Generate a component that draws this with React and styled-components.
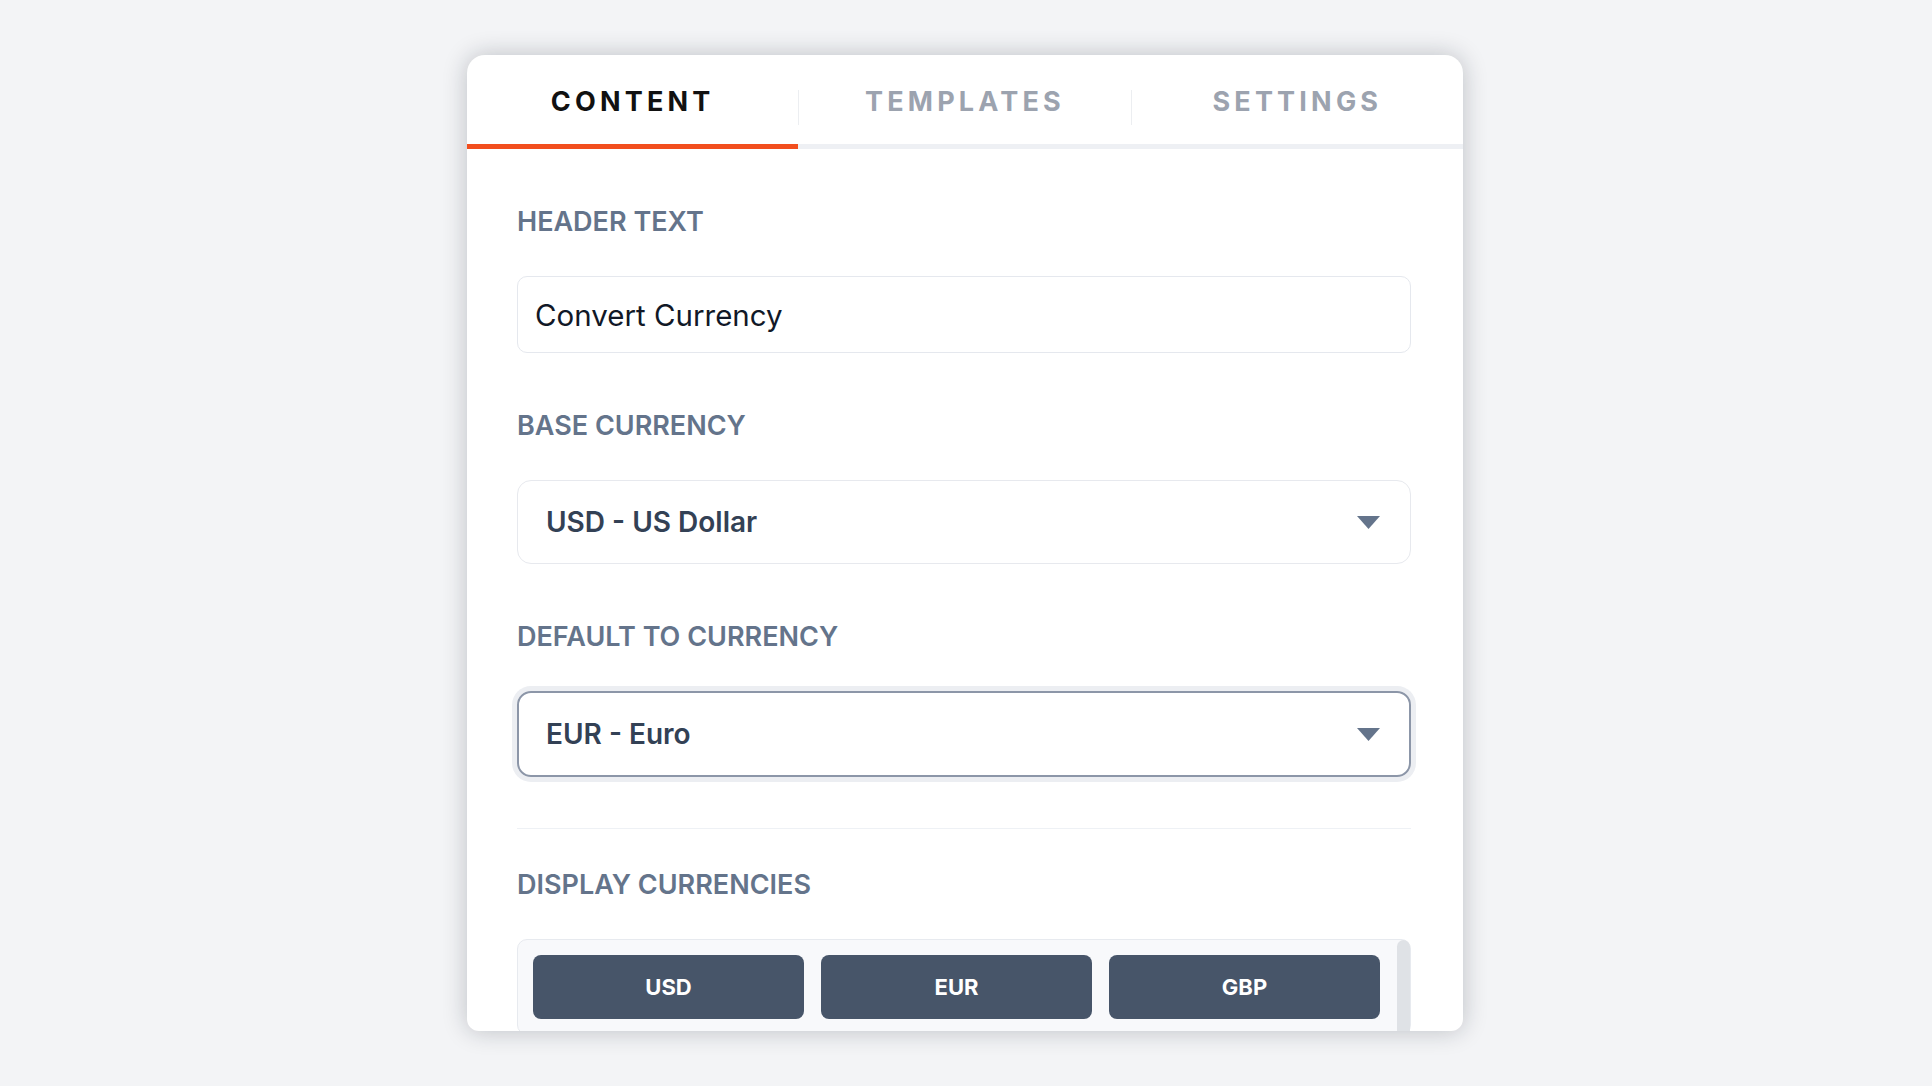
import React from "react";
import styled, {createGlobalStyle} from "styled-components";

const GlobalStyle = createGlobalStyle`
    body {
        margin: 0;
        background: #f3f4f6;
        font-family: Inter, "Liberation Sans", sans-serif;
    }
`;

const Page = styled.div`
    display: flex;
    justify-content: center;
    padding: 55px 2px 0 0;
    min-height: 100vh;
    box-sizing: border-box;
`;

const Card = styled.div`
    width: 996px;
    height: 976px;
    background: #fff;
    border-radius: 18px 18px 12px 12px;
    box-shadow: 0 0 24px rgba(15, 23, 42, 0.24);
    overflow: hidden;
    display: flex;
    flex-direction: column;
`;

const TabBar = styled.div`
    display: flex;
    border-bottom: 5px solid #eef0f4;
`;

const Tab = styled.div`
    flex: 1;
    height: 94px;
    margin-bottom: -5px;
    box-sizing: border-box;
    padding-top: 33px;
    text-align: center;
    font-size: 27px;
    line-height: 1;
    font-weight: 700;
    letter-spacing: 4.2px;
    color: ${({active}) => (active ? "#111111" : "#9ca3af")};
    border-bottom: 5px solid ${({active}) => (active ? "#f24e1e" : "transparent")};
    cursor: pointer;
`;

const TabDivider = styled.div`
    width: 1px;
    height: 35px;
    margin-top: 35px;
    background: #eceef1;
`;

const Body = styled.div`
    display: flex;
    flex-direction: column;
    padding: 59px 52px 0 50px;
`;

const Label = styled.div`
    font-size: 27px;
    line-height: 1;
    font-weight: 600;
    color: #64748b;
    margin-top: ${({first}) => (first ? "0" : "59px")};
    margin-bottom: 41px;
`;

const TextInput = styled.input`
    height: 77px;
    box-sizing: border-box;
    border: 1px solid #e5e8ee;
    border-radius: 10px;
    padding: 0 17px;
    font-family: Inter, "Liberation Sans", sans-serif;
    font-size: 29.5px;
    color: #111827;
    outline: none;
    background: #fff;
`;

const Select = styled.div`
    height: ${({focused}) => (focused ? "86px" : "84px")};
    box-sizing: border-box;
    display: flex;
    align-items: center;
    justify-content: space-between;
    padding: 0 ${({focused}) => (focused ? "29px 0 27px" : "30px 0 28px")};
    border: ${({focused}) => (focused ? "2px solid #8c96a8" : "1px solid #e7e9ee")};
    border-radius: 14px;
    box-shadow: ${({focused}) => (focused ? "0 0 0 5px #eceef2" : "none")};
    font-size: 28px;
    font-weight: 600;
    color: #334155;
    cursor: pointer;
`;

const Divider = styled.div`
    height: 1px;
    background: #eef1f5;
    margin: 51px 0 42px;
`;

const ChipBox = styled.div`
    display: flex;
    border: 1px solid #e7eaef;
    border-radius: 10px;
    background: #f8f9fb;
`;

const ChipGrid = styled.div`
    flex: 1;
    display: grid;
    grid-template-columns: repeat(3, 1fr);
    gap: 17px;
    padding: 15px 17px 15px 15px;
`;

const Chip = styled.button`
    height: 64px;
    border: none;
    border-radius: 8px;
    background: #475569;
    color: #fff;
    font-family: Inter, "Liberation Sans", sans-serif;
    font-size: 22px;
    font-weight: 700;
    cursor: pointer;
`;

const ScrollThumb = styled.div`
    width: 13px;
    background: #dfe2e6;
    border-radius: 7px 7px 0 0;
`;

function Caret() {
    return (
        <svg width="23" height="13" viewBox="0 0 23 13">
            <polygon points="0,0 23,0 11.5,13" fill="#64748b" />
        </svg>
    );
}

export default function App() {
    const tabs = ["CONTENT", "TEMPLATES", "SETTINGS"];
    const currencies = ["USD", "EUR", "GBP"];

    return (
        <>
            <GlobalStyle />
            <Page>
                <Card>
                    <TabBar>
                        {tabs.map((t, i) => (
                            <React.Fragment key={t}>
                                {i > 0 && <TabDivider />}
                                <Tab active={i === 0}>{t}</Tab>
                            </React.Fragment>
                        ))}
                    </TabBar>
                    <Body>
                        <Label first>HEADER TEXT</Label>
                        <TextInput defaultValue="Convert Currency" />

                        <Label>BASE CURRENCY</Label>
                        <Select>
                            <span>USD - US Dollar</span>
                            <Caret />
                        </Select>

                        <Label>DEFAULT TO CURRENCY</Label>
                        <Select focused>
                            <span>EUR - Euro</span>
                            <Caret />
                        </Select>

                        <Divider />

                        <Label first>DISPLAY CURRENCIES</Label>
                        <ChipBox>
                            <ChipGrid>
                                {currencies.map((c) => (
                                    <Chip key={c}>{c}</Chip>
                                ))}
                            </ChipGrid>
                            <ScrollThumb />
                        </ChipBox>
                    </Body>
                </Card>
            </Page>
        </>
    );
}
